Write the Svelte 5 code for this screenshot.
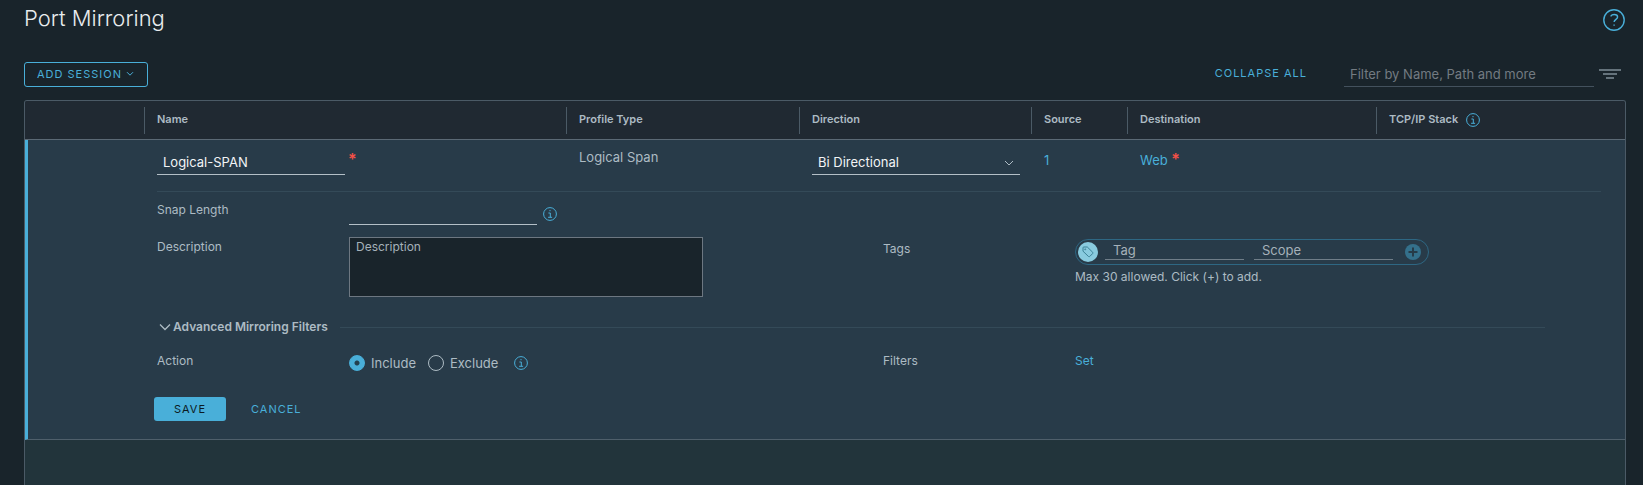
<script lang="ts">
  type Column = { label: string; width: number; info?: boolean };

  const columns: Column[] = [
    { label: 'Name', width: 422 },
    { label: 'Profile Type', width: 233 },
    { label: 'Direction', width: 232 },
    { label: 'Source', width: 96 },
    { label: 'Destination', width: 249 },
    { label: 'TCP/IP Stack', width: 249, info: true }
  ];

  let name = $state('Logical-SPAN');
  let direction = $state('Bi Directional');
  let action = $state('include');
</script>

{#snippet infoIcon()}
  <svg class="info" viewBox="0 0 14 14" aria-hidden="true">
    <circle cx="7" cy="7" r="6.4" />
    <path d="M5.4 6h1.9v4.2M5.1 10.3h4M6.4 3.7h1.2" />
  </svg>
{/snippet}

<div class="page">
  <header class="title-bar">
    <h1>Port Mirroring</h1>
    <button class="icon-button" aria-label="Help">
      <svg class="help" viewBox="0 0 22 22" aria-hidden="true">
        <circle cx="11" cy="11" r="10.2" />
        <path d="M7.6 7.3C8.5 6 9.7 5.5 11.2 5.5c2 0 3.4 1 3.4 2.6 0 2.2-3.5 2.4-3.5 5" />
        <path d="M11.1 15.4v1.4" />
      </svg>
    </button>
  </header>

  <div class="toolbar">
    <button class="outline">
      ADD SESSION
      <svg class="caret" viewBox="0 0 8 6" aria-hidden="true"><path d="M1 1.200l3 3 3-3" /></svg>
    </button>
    <div class="tools">
      <button class="link-button">COLLAPSE ALL</button>
      <input class="filter" type="text" placeholder="Filter by Name, Path and more" aria-label="Filter" />
      <button class="icon-button" aria-label="Filter options">
        <svg class="lines" viewBox="0 0 22 12" aria-hidden="true">
          <path d="M0 2h22M4 6h14M7 10h8" />
        </svg>
      </button>
    </div>
  </div>

  <main class="grid">
    <table>
      <colgroup>
        <col style:width="119px" />
        {#each columns as column}
          <col style:width="{column.width}px" />
        {/each}
      </colgroup>
      <thead>
        <tr>
          <th></th>
          {#each columns as column}
            <th>
              <div class="head">
                {column.label}
                {#if column.info}{@render infoIcon()}{/if}
              </div>
            </th>
          {/each}
        </tr>
      </thead>
      <tbody>
        <tr class="session">
          <td class="marker"></td>
          <td>
            <div class="required-field">
              <input class="line-input name" type="text" aria-label="Name" bind:value={name} />
              <span class="star">*</span>
            </div>
          </td>
          <td><span class="plain">Logical Span</span></td>
          <td>
            <div class="select">
              <select aria-label="Direction" bind:value={direction}>
                <option>Bi Directional</option>
                <option>Ingress</option>
                <option>Egress</option>
              </select>
              <svg class="select-caret" viewBox="0 0 10 6" aria-hidden="true"><path d="M1 1l4 4 4-4" /></svg>
            </div>
          </td>
          <td><a class="cell-link" href="#source">1</a></td>
          <td>
            <a class="cell-link" href="#destination">Web</a>
            <span class="star">*</span>
          </td>
          <td></td>
        </tr>
        <tr>
          <td class="marker detail" colspan="7">
            <div class="form">
              <div class="fields snap">
                <label for="snap">Snap Length</label>
                <div class="inline">
                  <input id="snap" class="line-input" type="text" />
                  {@render infoIcon()}
                </div>
              </div>

              <div class="fields description">
                <label for="description">Description</label>
                <textarea id="description" placeholder="Description"></textarea>
                <label class="tags-label" for="tag">Tags</label>
                <div>
                  <div class="pill">
                    <span class="badge">
                      <svg viewBox="0 0 12 12" aria-hidden="true">
                        <path d="M1 1.800v3.400l5.500 5.300q.6.500 1.200 0l3-3q.5-.6 0-1.200L5.300 1H1.800q-.8 0-.8.800z" />
                        <circle cx="3.200" cy="3.300" r=".5" />
                      </svg>
                    </span>
                    <input id="tag" type="text" placeholder="Tag" />
                    <input type="text" placeholder="Scope" aria-label="Scope" />
                    <button class="add" aria-label="Add tag">
                      <svg viewBox="0 0 16 16" aria-hidden="true"><path d="M8 3.500v9M3.500 8h9" /></svg>
                    </button>
                  </div>
                  <p class="hint">Max 30 allowed. Click (+) to add.</p>
                </div>
              </div>

              <div class="section">
                <button class="section-toggle" aria-expanded="true">
                  <svg class="section-caret" viewBox="0 0 12 8" aria-hidden="true"><path d="M1 1.500l5 5 5-5" /></svg>
                  Advanced Mirroring Filters
                </button>
                <hr />
              </div>

              <div class="fields action">
                <span>Action</span>
                <div class="inline radios">
                  <label><input type="radio" value="include" bind:group={action} />Include</label>
                  <label><input type="radio" value="exclude" bind:group={action} />Exclude</label>
                  {@render infoIcon()}
                </div>
                <span>Filters</span>
                <a href="#filters">Set</a>
              </div>
            </div>
            <div class="buttons">
              <button class="primary">SAVE</button>
              <button class="link-button">CANCEL</button>
            </div>
          </td>
        </tr>
      </tbody>
    </table>
  </main>
</div>

<style>
  :global(body) {
    margin: 0;
    background: #19242b;
  }

  .page {
    --blue: #49afd9;
    --text: #adbbc4;
    --rule: #4b5a66;
    display: flex;
    flex-direction: column;
    box-sizing: border-box;
    min-height: 100vh;
    padding: 0 16px 0 24px;
    background: #19242b;
    color: var(--text);
    font: 13px/20px Inter, 'Liberation Sans', sans-serif;
  }

  button,
  input,
  select,
  textarea {
    box-sizing: border-box;
    margin: 0;
    padding: 0;
    border: 0;
    border-radius: 0;
    background: none;
    color: inherit;
    font: inherit;
    outline: 0;
  }

  button {
    cursor: pointer;
  }

  svg {
    display: block;
    flex: none;
    fill: none;
    stroke: currentColor;
  }

  a {
    color: var(--blue);
    text-decoration: none;
  }

  .title-bar {
    display: flex;
    justify-content: space-between;
    align-items: center;
    height: 36px;
    padding-right: 2px;
  }

  h1 {
    margin: 0;
    color: #e9ecef;
    font-size: 22px;
    font-weight: 300;
    line-height: 24px;
  }

  .icon-button {
    color: var(--blue);
  }

  .title-bar .icon-button {
    padding: 4px 0 0;
  }

  .help {
    width: 22px;
    height: 22px;
    stroke-width: 1.400;
  }

  .toolbar {
    display: flex;
    justify-content: space-between;
    align-items: center;
    height: 28px;
    margin: 24px 0 12px;
  }

  .outline,
  .link-button,
  .primary {
    color: var(--blue);
    font-size: 11px;
    font-weight: 400;
    letter-spacing: 1px;
  }

  .outline {
    display: flex;
    align-items: center;
    gap: 4px;
    height: 25px;
    padding: 0 13px 0 12px;
    border: 1px solid var(--blue);
    border-radius: 3px;
  }

  .caret {
    width: 8px;
    height: 6px;
  }

  .tools {
    display: flex;
    align-items: center;
  }

  .tools .link-button {
    padding-bottom: 2px;
  }

  .filter {
    width: 250px;
    height: 25px;
    margin: 0 5px 0 37px;
    padding: 0 6px;
    border-bottom: 1px solid #43515d;
  }

  .filter::placeholder {
    color: #737b82;
    opacity: 1;
  }

  .tools .icon-button {
    padding-right: 6px;
    color: #65737c;
  }

  .lines {
    width: 22px;
    height: 12px;
    stroke-width: 2;
  }

  .grid {
    flex: 1;
    margin-right: 1px;
    border: 1px solid var(--rule);
    border-bottom: 0;
    border-radius: 3px 3px 0 0;
    background: #22343b;
    overflow: hidden;
  }

  table {
    width: 100%;
    border-collapse: separate;
    border-spacing: 0;
    table-layout: fixed;
  }

  th,
  td {
    padding: 0;
    text-align: left;
    vertical-align: top;
  }

  th {
    padding: 6px 0 5px;
    border-bottom: 1px solid #5b6975;
    background: #202932;
    font-size: 11px;
    font-weight: 600;
    line-height: 24px;
  }

  .head {
    display: flex;
    gap: 8px;
    height: 27px;
    padding-left: 12px;
    border-left: 1px solid var(--rule);
  }

  .info {
    width: 14px;
    height: 14px;
    color: var(--blue);
  }

  .head .info {
    margin-top: 6px;
  }

  td {
    background: #283b49;
  }

  .session td {
    height: 51px;
    padding-left: 13px;
  }

  .session .marker,
  .marker {
    padding-left: 0;
    border-left: 3px solid var(--blue);
  }

  .required-field {
    display: flex;
    gap: 3px;
    padding-top: 10px;
  }

  .line-input {
    width: 188px;
    height: 25px;
    padding: 0 6px;
    border-bottom: 1px solid #b4bfc7;
    color: #f2f4f6;
  }

  .star {
    color: #f55047;
    font-size: 16px;
    font-weight: 600;
    line-height: 18px;
  }

  .plain {
    display: block;
    padding-top: 7px;
  }

  .select {
    position: relative;
    margin-right: 11px;
    padding-top: 10px;
  }

  select {
    display: block;
    width: 100%;
    height: 25px;
    padding: 0 24px 0 6px;
    border-bottom: 1px solid #b4bfc7;
    color: #f2f4f6;
    appearance: none;
  }

  .select-caret {
    position: absolute;
    right: 6px;
    top: 20px;
    width: 10px;
    height: 6px;
    pointer-events: none;
  }

  .cell-link {
    display: inline-block;
    padding-top: 10px;
  }

  .marker.detail {
    padding: 0 24px 18px 126px;
    border-bottom: 1px solid #4f5f6b;
    font-size: 12px;
  }

  .form {
    margin-left: 3px;
    border-top: 1px solid #344a58;
  }

  .fields {
    display: grid;
    grid-template-columns: 192px 1fr 192px 1fr;
    margin-right: -8px;
  }

  .inline {
    display: flex;
    align-items: center;
  }

  .snap {
    padding-top: 8px;
  }

  .snap .inline {
    gap: 6px;
  }

  .snap .info {
    margin-top: 2px;
  }

  .description {
    padding-top: 12px;
  }

  textarea {
    display: block;
    width: 354px;
    height: 60px;
    padding: 0 6px;
    border: 1px solid #6d7781;
    background: #19242b;
    line-height: 18px;
    resize: none;
  }

  textarea::placeholder,
  .pill input::placeholder {
    color: #a5b1b9;
    opacity: 1;
  }

  .tags-label {
    padding-top: 2px;
  }

  .pill {
    display: flex;
    align-items: center;
    box-sizing: border-box;
    width: 354px;
    height: 26px;
    margin-top: 2px;
    padding: 0 7px 0 2px;
    border: 1px solid #2e6783;
    border-radius: 13px;
    font-size: 13px;
  }

  .badge {
    display: grid;
    place-items: center;
    width: 20px;
    height: 20px;
    margin-right: 7px;
    border-radius: 50%;
    background: #89cbdf;
    color: #3b8196;
  }

  .badge svg {
    width: 12px;
    height: 12px;
  }

  .pill input {
    flex: 1;
    min-width: 0;
    height: 20px;
    margin: 0 10px 4px 0;
    padding: 0 8px;
    border-bottom: 1px solid #6f7d88;
  }

  .add {
    width: 16px;
    height: 16px;
    margin-left: 2px;
    border-radius: 50%;
    background: #34708b;
    color: #263b48;
  }

  .add svg {
    stroke-width: 2;
  }

  .hint {
    margin: 2px 0 0;
  }

  .section {
    display: flex;
    align-items: center;
    gap: 12px;
    margin: 20px 56px 0 2px;
  }

  .section-toggle {
    display: flex;
    align-items: center;
    gap: 2px;
    font-weight: 600;
  }

  .section-caret {
    width: 12px;
    height: 8px;
    stroke-width: 1.300;
  }

  hr {
    flex: 1;
    margin: 0;
    border: 0;
    border-top: 1px solid #344a58;
  }

  .action {
    padding-top: 14px;
  }

  .radios {
    padding-top: 2px;
    font-size: 13px;
  }

  .radios label {
    display: flex;
    align-items: center;
    gap: 6px;
    margin-right: 12px;
  }

  .radios label + label {
    margin-right: 16px;
  }

  .radios input {
    width: 16px;
    height: 16px;
    border: 1px solid #adbbc4;
    border-radius: 50%;
    appearance: none;
  }

  .radios input:checked {
    border-color: var(--blue);
    background: radial-gradient(circle, #22404f 2px, var(--blue) 3px);
  }

  .buttons {
    display: flex;
    align-items: center;
    gap: 25px;
    margin-top: 24px;
  }

  .primary {
    width: 72px;
    height: 24px;
    border-radius: 3px;
    background: var(--blue);
    color: #0c1a22;
  }
</style>
